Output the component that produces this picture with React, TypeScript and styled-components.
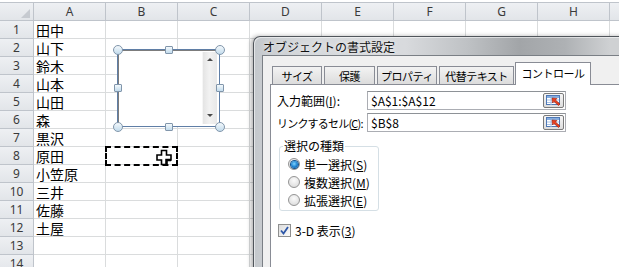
import React from 'react';
import styled, { createGlobalStyle, css } from 'styled-components';

const GlobalStyle = createGlobalStyle`
  html, body { margin: 0; padding: 0; background: #fff; }
  body { font-family: "Noto Sans CJK JP", "Noto Sans", sans-serif; }
  * { box-sizing: border-box; }
`;

const COLUMNS = ['A', 'B', 'C', 'D', 'E', 'F', 'G', 'H', ''];
const NAMES = ['田中', '山下', '鈴木', '山本', '山田', '森', '黒沢', '原田', '小笠原', '三井', '佐藤', '土屋'];
const ROW_COUNT = 14;

const Screen = styled.div`
  position: relative;
  width: 619px;
  height: 267px;
  overflow: hidden;
  background: #fff;
`;

/* ---------- worksheet ---------- */

const Sheet = styled.div`
  display: grid;
  grid-template-columns: 34px repeat(9, 72px);
  grid-template-rows: 19px repeat(${ROW_COUNT}, 18px);
  padding-top: 2px;
`;

const headerBg = css`
  background: linear-gradient(#eef0f3, #e2e5e9);
  border-color: #bfc4cb;
  border-style: solid;
`;

const Corner = styled.div`
  position: relative;
  ${headerBg}
  border-width: 1px 1px 1px 0;
  &::after {
    content: '';
    position: absolute;
    right: 3px;
    bottom: 2px;
    border-style: solid;
    border-width: 0 0 9px 9px;
    border-color: transparent transparent #c6cad0 transparent;
  }
`;

const ColHead = styled.div`
  ${headerBg}
  border-width: 1px 1px 1px 0;
  display: flex;
  align-items: flex-end;
  justify-content: center;
  padding-bottom: 1px;
  font-family: "Noto Sans", sans-serif;
  font-size: 12px;
  line-height: 14px;
  color: #3a3a3a;
`;

const RowHead = styled.div`
  ${headerBg}
  border-width: 0 1px 1px 0;
  display: flex;
  align-items: flex-end;
  justify-content: center;
  padding-bottom: 1px;
  font-family: "Noto Sans", sans-serif;
  font-size: 12px;
  line-height: 14px;
  color: #3a3a3a;
`;

const Cell = styled.div`
  border-right: 1px solid #dadcdd;
  border-bottom: 1px solid #dadcdd;
  display: flex;
  align-items: center;
  padding: 2px 0 0 2px;
  font-size: 14px;
  line-height: 15px;
  color: #000;
  white-space: nowrap;
  overflow: hidden;
`;

/* ---------- list box form control (selected) ---------- */

const ListBox = styled.div`
  position: absolute;
  left: 117px;
  top: 49px;
  width: 103px;
  height: 78px;
  border: 1px solid #5f7ea6;
  background: #fff;
  box-shadow: inset 1px 1px 0 #7c7c7c;
  display: flex;
  justify-content: flex-end;
  padding: 2px;
`;

const ScrollTrack = styled.div`
  width: 15px;
  background: linear-gradient(90deg, #e4e4e4, #f2f2f2 45%, #e8e8e8);
  border-left: 1px solid #f6f6f6;
  display: flex;
  flex-direction: column;
  justify-content: space-between;
  align-items: center;
  padding: 6px 0 7px;
`;

const Arrow = styled.span<{ $dir: 'up' | 'down' }>`
  width: 0;
  height: 0;
  border-left: 3px solid transparent;
  border-right: 3px solid transparent;
  ${(p) => (p.$dir === 'up' ? 'border-bottom: 3px solid #4a4a4a;' : 'border-top: 3px solid #4a4a4a;')}
`;

const Handle = styled.span<{ $x: string; $y: string; $round?: boolean }>`
  position: absolute;
  left: ${(p) => p.$x};
  top: ${(p) => p.$y};
  width: ${(p) => (p.$round ? 10 : 8)}px;
  height: ${(p) => (p.$round ? 10 : 8)}px;
  transform: translate(-50%, -50%);
  border: 1px solid #8196ab;
  border-radius: ${(p) => (p.$round ? '50%' : '1px')};
  background: linear-gradient(#f4f9fc, #c2dbec);
`;

const Marquee = styled.div`
  position: absolute;
  left: 105px;
  top: 146px;
  width: 73px;
  height: 20px;
  border: 2px dashed #000;
`;

const CursorIcon = styled.svg`
  position: absolute;
  left: 156px;
  top: 149px;
`;

/* ---------- dialog window ---------- */

const Window = styled.div`
  position: absolute;
  left: 253px;
  top: 36px;
  width: 380px;
  height: 250px;
  border: 1px solid #50555b;
  border-right: none;
  border-radius: 7px 0 0 0;
  background: linear-gradient(
    90deg,
    #c4c8cc 0%,
    #d6d9dc 14%,
    #d8dadd 40%,
    #bfc2c5 56%,
    #a2a5a8 70%,
    #aeb1b4 82%,
    #cfd1d3 94%
  );
  box-shadow: -2px 0 4px rgba(0, 0, 0, 0.3), inset 1px 1px 0 rgba(255, 255, 255, 0.55);
  display: flex;
  flex-direction: column;
  padding-left: 8px;
`;

const TitleBar = styled.div`
  height: 30px;
  display: flex;
  align-items: center;
  padding-left: 1px;
  font-size: 12px;
  color: #111;
  text-shadow: 0 0 5px rgba(255, 255, 255, 0.9);
`;

const Client = styled.div`
  flex: 1;
  background: #f0f0f0;
  border: 1px solid #7a7f85;
  border-right: none;
  padding: 6px 0 0 7px;
  font-size: 12px;
  color: #000;
`;

const TabStrip = styled.div`
  display: flex;
  align-items: flex-end;
  height: 23px;
  padding-left: 2px;
  margin-bottom: -1px;
  position: relative;
  z-index: 1;
`;

const Tab = styled.div<{ $w: number; $active?: boolean }>`
  width: ${(p) => p.$w}px;
  height: ${(p) => (p.$active ? 23 : 19)}px;
  margin-right: 2px;
  margin-left: ${(p) => (p.$active ? -1 : 0)}px;
  border: 1px solid #898c95;
  border-bottom: ${(p) => (p.$active ? 'none' : '1px solid #898c95')};
  background: ${(p) => (p.$active ? '#fff' : 'linear-gradient(#f3f3f3, #dcdcdc)')};
  display: flex;
  align-items: center;
  justify-content: center;
  padding-bottom: ${(p) => (p.$active ? 3 : 0)}px;
  font-size: 11px;
  line-height: 14px;
  letter-spacing: -0.5px;
  white-space: nowrap;
`;

const Page = styled.div`
  background: #fff;
  border: 1px solid #898c95;
  border-right: none;
  height: 200px;
  padding: 6px 0 0 6px;
`;

const FieldRow = styled.div`
  display: grid;
  grid-template-columns: 90px 199px;
  align-items: center;
  height: 19px;
  margin-bottom: 3px;
`;

const Label = styled.span<{ $tight?: boolean }>`
  white-space: nowrap;
  line-height: 14px;
  font-size: ${(p) => (p.$tight ? 11 : 12)}px;
  letter-spacing: ${(p) => (p.$tight ? '-0.8px' : '0')};
`;

const Key = styled.span`
  text-decoration: underline;
  text-underline-offset: 1px;
`;

const RefInput = styled.div`
  height: 19px;
  border: 1px solid #abadb3;
  border-top-color: #8e9297;
  display: flex;
  align-items: center;
  padding: 0 1px 0 3px;
  background: #fff;
`;

const RefValue = styled.span`
  flex: 1;
  line-height: 14px;
`;

const RefButton = styled.span`
  width: 21px;
  height: 15px;
  border: 1px solid #7a7a7a;
  border-radius: 2px;
  background: linear-gradient(#f6f6f6, #dddddd);
  display: flex;
  align-items: center;
  justify-content: center;
`;

const Group = styled.fieldset`
  margin: 7px 0 0 2px;
  width: 100px;
  border: 1px solid #d5dfe5;
  border-radius: 3px;
  padding: 2px 0 1px 3px;
`;

const Legend = styled.legend`
  padding: 0 1px;
  line-height: 14px;
`;

const OptionRow = styled.div`
  display: flex;
  align-items: center;
  height: 18px;
  padding-left: 5px;
  gap: 4px;
  white-space: nowrap;
`;

const Radio = styled.span<{ $checked?: boolean }>`
  width: 12px;
  height: 12px;
  border-radius: 50%;
  border: 1px solid #949494;
  background: radial-gradient(circle at 50% 35%, #fbfbfb, #dedede 80%);
  display: flex;
  align-items: center;
  justify-content: center;
  &::after {
    content: '';
    display: ${(p) => (p.$checked ? 'block' : 'none')};
    width: 7px;
    height: 7px;
    border-radius: 50%;
    background: radial-gradient(circle at 45% 40%, #7fd3ff, #1b80cf 55%, #0b4f94);
    box-shadow: 0 0 0 1px #17558f;
  }
`;

const CheckRow = styled.div`
  display: flex;
  align-items: center;
  gap: 4px;
  margin: 13px 0 0 1px;
  height: 13px;
  line-height: 14px;
`;

const CheckBox = styled.span`
  width: 13px;
  height: 13px;
  border: 1px solid #8e8f8f;
  background: linear-gradient(135deg, #dcdcdc, #fbfbfb);
  display: flex;
  align-items: center;
  justify-content: center;
`;

function RefEditIcon() {
  return (
    <svg width="15" height="11" viewBox="0 0 15 11">
      <rect x="0.5" y="0.5" width="13" height="9" fill="#fff" stroke="#4f78b5" />
      <rect x="1" y="1" width="12" height="2" fill="#86aee0" />
      <line x1="1" y1="5" x2="13" y2="5" stroke="#a9c3e6" />
      <line x1="1" y1="7.5" x2="13" y2="7.5" stroke="#a9c3e6" />
      <line x1="5" y1="3" x2="5" y2="10" stroke="#a9c3e6" />
      <path d="M6 3 L11 3.5 L9.5 5 L14 9 L12.5 10.5 L8 6.5 L6.5 8 Z" fill="#e8401f" stroke="#9b1c0c" strokeWidth="0.6" />
    </svg>
  );
}

export default function App() {
  return (
    <Screen>
      <GlobalStyle />
      <Sheet>
        <Corner />
        {COLUMNS.map((c, ci) => (
          <ColHead key={ci}>{c}</ColHead>
        ))}
        {Array.from({ length: ROW_COUNT }, (_, r) => (
          <React.Fragment key={r}>
            <RowHead>{r + 1}</RowHead>
            {COLUMNS.map((c, ci) => (
              <Cell key={ci}>{ci === 0 ? NAMES[r] ?? '' : ''}</Cell>
            ))}
          </React.Fragment>
        ))}
      </Sheet>

      <ListBox>
        <ScrollTrack>
          <Arrow $dir="up" />
          <Arrow $dir="down" />
        </ScrollTrack>
        <Handle $round $x="-0.5px" $y="-0.5px" />
        <Handle $x="50%" $y="-0.5px" />
        <Handle $round $x="calc(100% + 0.5px)" $y="-0.5px" />
        <Handle $x="-0.5px" $y="50%" />
        <Handle $x="calc(100% + 0.5px)" $y="50%" />
        <Handle $round $x="-0.5px" $y="calc(100% + 0.5px)" />
        <Handle $x="50%" $y="calc(100% + 0.5px)" />
        <Handle $round $x="calc(100% + 0.5px)" $y="calc(100% + 0.5px)" />
      </ListBox>

      <Marquee />
      <CursorIcon width="16" height="17" viewBox="0 0 16 17">
        <path d="M5.5 1.5 H10.5 V6 H15 V11 H10.5 V15.5 H5.5 V11 H1 V6 H5.5 Z" fill="#fff" stroke="#000" strokeWidth="1.6" />
        <path d="M10.5 15.5 V11 H15" fill="none" stroke="#000" strokeWidth="2.4" />
      </CursorIcon>

      <Window>
        <TitleBar>オブジェクトの書式設定</TitleBar>
        <Client>
          <TabStrip>
            <Tab $w={50}>サイズ</Tab>
            <Tab $w={51}>保護</Tab>
            <Tab $w={60}>プロパティ</Tab>
            <Tab $w={75}>代替テキスト</Tab>
            <Tab $w={76} $active>
              コントロール
            </Tab>
          </TabStrip>
          <Page>
            <FieldRow>
              <Label>
                入力範囲(<Key>I</Key>):
              </Label>
              <RefInput>
                <RefValue>$A$1:$A$12</RefValue>
                <RefButton>
                  <RefEditIcon />
                </RefButton>
              </RefInput>
            </FieldRow>
            <FieldRow>
              <Label $tight>
                リンクするセル(<Key>C</Key>):
              </Label>
              <RefInput>
                <RefValue>$B$8</RefValue>
                <RefButton>
                  <RefEditIcon />
                </RefButton>
              </RefInput>
            </FieldRow>

            <Group>
              <Legend>選択の種類</Legend>
              <OptionRow>
                <Radio $checked />
                <span>
                  単一選択(<Key>S</Key>)
                </span>
              </OptionRow>
              <OptionRow>
                <Radio />
                <span>
                  複数選択(<Key>M</Key>)
                </span>
              </OptionRow>
              <OptionRow>
                <Radio />
                <span>
                  拡張選択(<Key>E</Key>)
                </span>
              </OptionRow>
            </Group>

            <CheckRow>
              <CheckBox>
                <svg width="9" height="9" viewBox="0 0 9 9">
                  <path d="M1 4.5 L3.5 7.5 L8 1" fill="none" stroke="#2d57a8" strokeWidth="1.8" />
                </svg>
              </CheckBox>
              <span>
                3-D 表示(<Key>3</Key>)
              </span>
            </CheckRow>
          </Page>
        </Client>
      </Window>
    </Screen>
  );
}
